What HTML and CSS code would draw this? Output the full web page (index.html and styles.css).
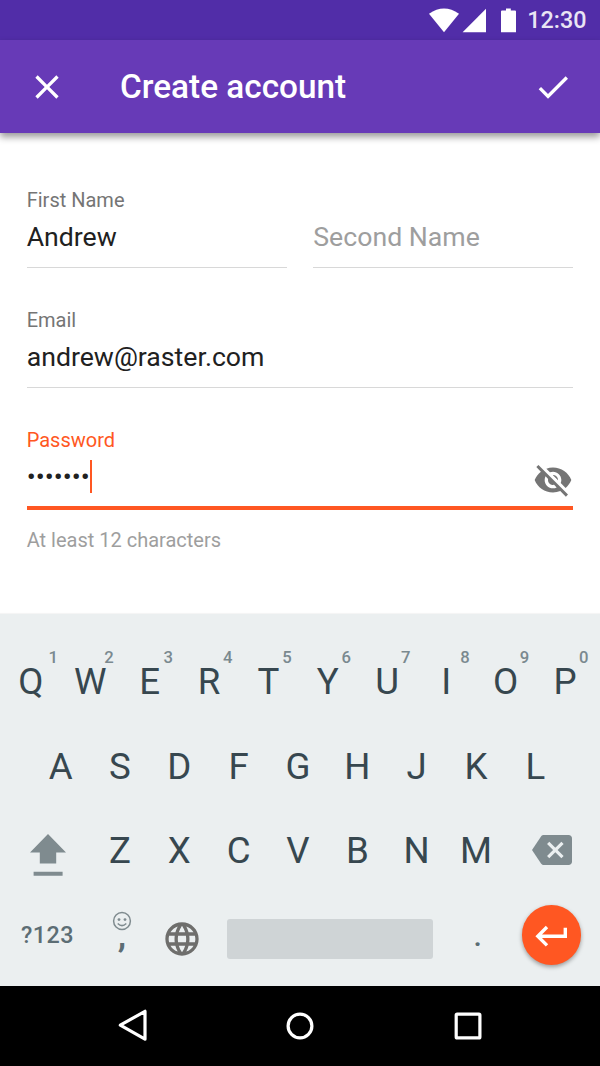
FILE: index.html
```html
<!DOCTYPE html>
<html lang="en">
<head>
<meta charset="utf-8">
<title>Create account</title>
<link rel="stylesheet" href="styles.css">
</head>
<body>
<div class="screen">
  <div class="status">
    <svg class="status-icons" width="90" height="26" viewBox="0 0 90 26">
      <path d="M0 5.8Q15-4.8 30 5.8L15 24.2Z"/>
      <path d="M57 .8V24.2H33.6Z"/>
      <path d="M77 .6h4.8v1.8H86a1 1 0 0 1 1 1V24.200H72V3.400a1 1 0 0 1 1-1h4z"/>
    </svg>
    <span class="clock">12:30</span>
  </div>
  <header class="appbar">
    <svg class="icon" viewBox="0 0 24 24"><path d="M19 6.410 17.590 5 12 10.590 6.410 5 5 6.410 10.590 12 5 17.590 6.410 19 12 13.410 17.590 19 19 17.590 13.410 12z"/></svg>
    <h1 class="title">Create account</h1>
    <svg class="icon" viewBox="0 0 24 24"><path d="M9 16.170 4.830 12l-1.420 1.410L9 19 21 7l-1.410-1.410z"/></svg>
  </header>
  <main class="form">
    <div class="names">
      <div class="field"><div class="label">First Name</div><div class="value">Andrew</div></div>
      <div class="field"><div class="label"></div><div class="value placeholder">Second Name</div></div>
    </div>
    <div class="field"><div class="label">Email</div><div class="value">andrew@raster.com</div></div>
    <div class="field active">
      <div class="label">Password</div>
      <div class="value password"><span>•••••••</span><span class="caret"></span>
        <svg class="eye" viewBox="0 0 24 24"><path d="M12 7c2.760 0 5 2.240 5 5 0 .65-.13 1.260-.36 1.830l2.920 2.920c1.510-1.260 2.700-2.890 3.430-4.750-1.730-4.390-6-7.500-11-7.500-1.400 0-2.740.25-3.980.7l2.160 2.160C10.740 7.130 11.350 7 12 7zM2 4.270l2.280 2.280.46.46C3.080 8.300 1.780 10.020 1 12c1.730 4.390 6 7.500 11 7.500 1.550 0 3.030-.3 4.380-.84l.42.42L19.730 22 21 20.730 3.270 3 2 4.270zM7.530 9.800l1.550 1.550c-.05.21-.08.43-.08.65 0 1.660 1.340 3 3 3 .22 0 .44-.03.65-.08l1.550 1.550c-.67.33-1.410.53-2.200.53-2.760 0-5-2.240-5-5 0-.79.2-1.530.53-2.200zm4.310-.78l3.150 3.150.02-.16c0-1.660-1.340-3-3-3l-.17.01z"/></svg>
      </div>
      <div class="hint">At least 12 characters</div>
    </div>
  </main>
  <section class="keyboard">
    <div class="row">
      <div class="key">Q<span class="num first">1</span></div><div class="key">W<span class="num">2</span></div><div class="key">E<span class="num">3</span></div><div class="key">R<span class="num">4</span></div><div class="key">T<span class="num">5</span></div><div class="key">Y<span class="num">6</span></div><div class="key">U<span class="num">7</span></div><div class="key">I<span class="num">8</span></div><div class="key">O<span class="num">9</span></div><div class="key">P<span class="num">0</span></div>
    </div>
    <div class="row middle">
      <div class="key">A</div><div class="key">S</div><div class="key">D</div><div class="key">F</div><div class="key">G</div><div class="key">H</div><div class="key">J</div><div class="key">K</div><div class="key">L</div>
    </div>
    <div class="row">
      <div class="key wide shift"><svg width="36" height="42" viewBox="0 0 36 42"><path d="M18 0 36 18.500H26.200V29.500H9.800V18.500H0zM3.600 37.700h29v4h-29z"/></svg></div>
      <div class="key">Z</div><div class="key">X</div><div class="key">C</div><div class="key">V</div><div class="key">B</div><div class="key">N</div><div class="key">M</div>
      <div class="key wide erase"><svg class="icon" viewBox="0 0 24 24"><path d="M22 3H7c-.69 0-1.230.35-1.590.88L0 12l5.410 8.110c.36.53.9.89 1.590.89h15c1.100 0 2-.9 2-2V5c0-1.100-.9-2-2-2z"/><path class="cross" d="m9.700 7.700 8.600 8.600m0-8.600-8.600 8.600"/></svg></div>
    </div>
    <div class="bottom">
      <div class="sym">?123</div>
      <div class="comma">
        <svg width="20" height="20" viewBox="0 0 20 20"><circle class="line" cx="10" cy="10" r="8.400"/><circle cx="7" cy="8.600" r="1.400"/><circle cx="13" cy="8.600" r="1.400"/><path class="line" d="M5.700 12.500q4.300 4.200 8.600 0"/></svg>
        <span>,</span>
      </div>
      <svg class="icon globe" viewBox="0 0 24 24"><path d="M11.990 2C6.470 2 2 6.480 2 12s4.470 10 9.990 10C17.520 22 22 17.520 22 12S17.520 2 11.990 2zm6.930 6h-2.950c-.32-1.250-.78-2.450-1.380-3.560 1.840.63 3.370 1.910 4.330 3.560zM12 4.040c.83 1.200 1.480 2.530 1.910 3.960h-3.820c.43-1.430 1.080-2.760 1.910-3.960zM4.260 14C4.100 13.360 4 12.690 4 12s.1-1.360.26-2h3.380c-.08.66-.14 1.320-.14 2s.06 1.340.14 2H4.260zm.82 2h2.950c.32 1.250.78 2.450 1.380 3.560-1.840-.63-3.370-1.900-4.330-3.560zm2.950-8H5.080c.96-1.660 2.490-2.930 4.330-3.560C8.810 5.550 8.350 6.750 8.030 8zM12 19.960c-.83-1.200-1.480-2.530-1.910-3.960h3.820c-.43 1.430-1.080 2.760-1.910 3.960zM14.340 14H9.660c-.09-.66-.16-1.320-.16-2s.07-1.350.16-2h4.680c.09.65.16 1.320.16 2s-.07 1.340-.16 2zm.25 5.560c.6-1.110 1.060-2.310 1.380-3.560h2.950c-.96 1.650-2.490 2.930-4.330 3.560zM16.360 14c.08-.66.14-1.320.14-2s-.06-1.340-.14-2h3.380c.16.64.26 1.310.26 2s-.1 1.360-.26 2h-3.380z"/></svg>
      <div class="space"></div>
      <div class="period">.</div>
      <div class="enter"><svg width="34" height="24" viewBox="0 0 34 24"><path d="M13 3 3.800 12.200 13 21.400M4 12.200H31.300V3.700"/></svg></div>
    </div>
  </section>
  <nav class="nav">
    <svg viewBox="0 0 34 34"><path d="M30 2.300V30.200L5.300 16.200Z"/></svg>
    <svg viewBox="0 0 34 34"><circle cx="17" cy="17" r="11.900"/></svg>
    <svg viewBox="0 0 34 34"><rect x="5.200" y="5.200" width="23.700" height="23.700" rx="1"/></svg>
  </nav>
</div>
</body>
</html>
```
FILE: styles.css
```css
* { box-sizing: border-box; }
body { margin: 0; background: #fff; font-family: Roboto, "Liberation Sans", sans-serif; }
svg { display: block; flex: none; }
.screen { width: 600px; height: 1066px; display: flex; flex-direction: column; overflow: hidden; }
.icon { width: 40px; height: 40px; fill: currentColor; }

.status { height: 40px; background: #512da8; display: flex; justify-content: flex-end; align-items: center; padding-right: 13.500px; color: #fff; }
.status-icons { fill: #fff; margin: 1px 8.500px 0 0; }
.clock { font-size: 23.330px; font-weight: 500; line-height: 40px; opacity: .88; }

.appbar { height: 93px; background: #673ab7; color: #fff; display: flex; align-items: center; padding: 0 26.700px; box-shadow: 0 4px 7px rgba(0,0,0,.4); }
.title { margin: 1px 0 0 53.300px; flex: 1; font-size: 33.330px; font-weight: 500; line-height: 42px; }

.form { height: 481px; padding: 54px 26.700px 0; }
.names { display: grid; grid-template-columns: 1fr 1fr; gap: 26.600px; }
.field { height: 120px; }
.label { height: 24px; line-height: 26px; font-size: 20px; color: #757575; }
.value { height: 57px; padding-top: 10px; line-height: 32px; font-size: 26.670px; color: #212121; border-bottom: 1px solid #d8d8d8; }
.placeholder { color: #9e9e9e; }
.active .label { color: #ff5722; }
.password { height: 59px; display: flex; border-bottom: 4px solid #ff5722; }
.caret { width: 2px; height: 33px; margin-left: 0; margin-top: -1px; background: #ff5722; }
.eye { width: 40px; height: 40px; margin: -1px 0 0 auto; fill: #757575; }
.hint { margin-top: 17px; font-size: 20px; line-height: 26px; color: #9e9e9e; }

.keyboard { height: 372px; background: #ebeff0; padding-top: 26px; color: #37474f; box-shadow: 0 -1px 1px rgba(0,0,0,.04); }
.row { height: 85px; display: flex; justify-content: center; margin-right: 4px; }
.middle { height: 84px; }
.key { position: relative; width: 59.350px; text-align: center; font-size: 36.670px; line-height: 84px; }
.num { position: absolute; right: 1px; top: 8px; width: 20px; font-size: 16.670px; font-weight: 500; line-height: 20px; color: #7a898f; }
.first { right: -2.500px; }
.wide { width: 89px; display: flex; color: #7f8b8f; }
.shift svg { margin: 25.300px 0 0 28.500px; fill: currentColor; }
.erase svg { margin: 20.500px 0 0 26.500px; }
.cross { stroke: #ebeff0; stroke-width: 1.900; fill: none; }

.bottom { height: 82px; display: grid; grid-template-columns: 95px 54px 65.300px 219px 88.700px 60px; align-items: center; text-align: center; color: #5c6d74; font-size: 23.330px; font-weight: 500; }
.sym { letter-spacing: .5px; }
.comma svg { margin: 0 auto; fill: #7f8b8f; }
.comma { height: 48px; font-size: 34px; font-weight: 700; line-height: 8px; }
.line { fill: none; stroke: #7f8b8f; stroke-width: 1.500; }
.globe { margin: 8px auto 0; fill: #6e6e6c; }
.space { height: 40px; margin: 8px 0 0 12.500px; border-radius: 3px; background: #cfd4d6; }
.period { font-size: 30px; }
.enter { width: 59.500px; height: 59.500px; border-radius: 50%; background: #ff5722; display: grid; place-items: center; box-shadow: 0 2px 4px rgba(0,0,0,.35); }
.enter svg { fill: none; stroke: #fff; stroke-width: 3.400; margin: 1px 2px 0 0; }

.nav { height: 80px; background: #000; display: flex; justify-content: space-between; align-items: center; padding: 0 115px; }
.nav svg { width: 34px; height: 34px; fill: none; stroke: #fff; stroke-width: 3.200; stroke-linejoin: round; }
```
